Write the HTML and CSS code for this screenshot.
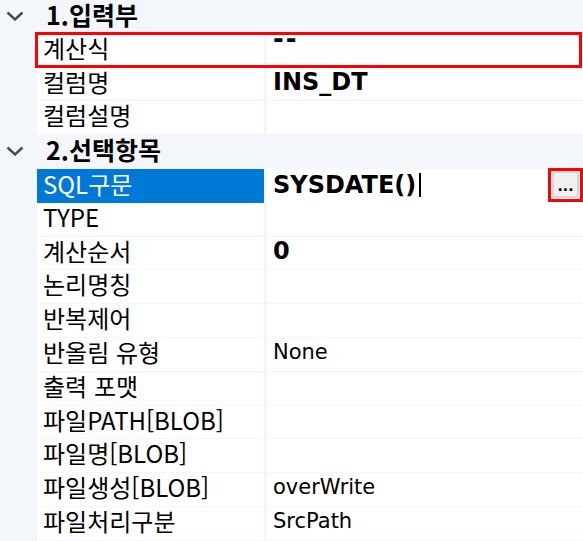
FILE: index.html
```html
<!DOCTYPE html>
<html lang="ko">
<head>
<meta charset="utf-8">
<link rel="stylesheet" href="styles.css">
</head>
<body>
<div class="grid">
  <div class="cat">
    <span class="chev"><svg width="18" height="10" viewBox="0 0 18 10"><polyline points="1.5,1.5 9,8.5 16.5,1.5" fill="none" stroke="#4a4a4a" stroke-width="2.4"/></svg></span>
    <span class="cat-title">1.입력부</span>
  </div>
  <div class="row hl"><div class="name">계산식</div><div class="val top"><span class="dash">--</span></div></div>
  <div class="row"><div class="name">컬럼명</div><div class="val bold">INS_DT</div></div>
  <div class="row"><div class="name">컬럼설명</div><div class="val"></div></div>
  <div class="cat">
    <span class="chev"><svg width="18" height="10" viewBox="0 0 18 10"><polyline points="1.5,1.5 9,8.5 16.5,1.5" fill="none" stroke="#4a4a4a" stroke-width="2.4"/></svg></span>
    <span class="cat-title">2.선택항목</span>
  </div>
  <div class="row sel"><div class="name">SQL구문</div><div class="val bold edit"><span class="edit-text">SYSDATE()<span class="caret"></span></span><span class="btn-box"><span class="btn">...</span></span></div></div>
  <div class="row"><div class="name">TYPE</div><div class="val"></div></div>
  <div class="row"><div class="name">계산순서</div><div class="val bold">0</div></div>
  <div class="row"><div class="name">논리명칭</div><div class="val"></div></div>
  <div class="row"><div class="name">반복제어</div><div class="val"></div></div>
  <div class="row"><div class="name">반올림 유형</div><div class="val">None</div></div>
  <div class="row"><div class="name">출력 포맷</div><div class="val"></div></div>
  <div class="row"><div class="name">파일PATH[BLOB]</div><div class="val"></div></div>
  <div class="row"><div class="name">파일명[BLOB]</div><div class="val"></div></div>
  <div class="row"><div class="name">파일생성[BLOB]</div><div class="val">overWrite</div></div>
  <div class="row"><div class="name">파일처리구분</div><div class="val">SrcPath</div></div>
</div>
</body>
</html>
```

FILE: styles.css
```css
html, body {
  margin: 0;
  padding: 0;
  background: #f3f6fa;
  overflow: hidden;
}
body {
  width: 583px;
  height: 541px;
  font-family: "Noto Sans CJK KR", "Noto Sans", sans-serif;
  color: #000;
}
.grid {
  display: grid;
  grid-auto-rows: 31.8px;
  row-gap: 2px;
}
.cat {
  display: flex;
  align-items: center;
  padding-left: 6px;
}
.chev {
  display: flex;
  width: 40px;
}
.cat-title {
  font-weight: bold;
  font-size: 25px;
  line-height: 1.05;
  padding-bottom: 4px;
}
.row {
  display: grid;
  grid-template-columns: 227px 1fr;
  column-gap: 3px;
  padding-left: 37px;
  position: relative;
}
.name, .val {
  background: #fff;
  display: flex;
  align-items: center;
  line-height: 1.2;
  white-space: nowrap;
  min-width: 0;
}
.name {
  font-size: 24px;
  padding: 0 0 4px 6px;
}
.val {
  padding: 0 0 3px 6px;
  font-size: 21px;
  font-family: "DejaVu Sans", sans-serif;
}
.val.bold {
  font-weight: bold;
  font-size: 24px;
}
.sel .name {
  background: #0078d7;
  color: #fff;
}
.hl::after {
  content: "";
  position: absolute;
  left: 35px;
  right: 1px;
  top: -2px;
  bottom: -2px;
  border: 3px solid #ff0000;
  pointer-events: none;
}
.val.top {
  align-items: flex-start;
}
.dash {
  font-weight: bold;
  font-size: 26px;
  line-height: 10px;
  letter-spacing: 2px;
}
.edit {
  justify-content: space-between;
  padding-right: 0;
}
.edit-text {
  display: flex;
  align-items: center;
}
.caret {
  display: inline-block;
  width: 2px;
  height: 24px;
  background: #000;
  margin-left: 3px;
}
.btn-box {
  align-self: center;
  box-sizing: border-box;
  width: 35px;
  height: 34px;
  margin: -1px 0;
  border: 3px solid #ff0000;
  display: flex;
  align-items: center;
  justify-content: center;
  background: #fff;
}
.btn {
  width: 27px;
  height: 27px;
  box-sizing: border-box;
  border: 2px solid #d6d6d6;
  border-radius: 4px;
  background: #f0f0f0;
  font-family: "DejaVu Sans", sans-serif;
  font-weight: bold;
  font-size: 14px;
  display: flex;
  align-items: flex-end;
  justify-content: center;
  line-height: 1;
  padding-bottom: 3px;
}
```
